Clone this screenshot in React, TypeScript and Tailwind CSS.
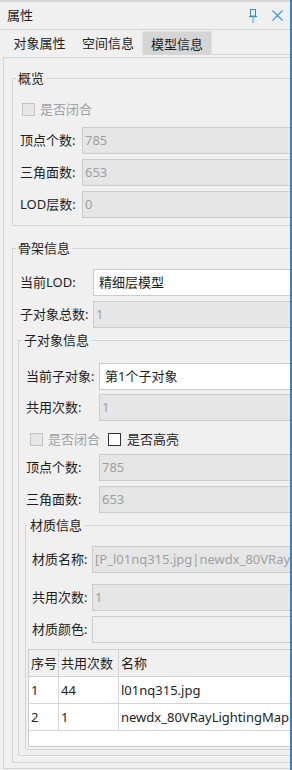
import type {ReactNode} from "react";

type BoxKind = "disabled" | "white" | "plain";

function Box({kind, value}: { kind: BoxKind; value?: string }) {
    const look =
        kind === "white"
            ? "bg-white text-[#1e1e1e] pl-[5px]"
            : kind === "disabled"
                ? "bg-[#e6e6e6] text-[#a0a0a0] pl-[2px]"
                : "bg-[#f0f0f0] pl-[2px]";
    return (
        <div className={`flex h-full flex-1 items-center overflow-hidden whitespace-nowrap border border-[#cccccc] ${look}`}>
            {value}
        </div>
    );
}

function Field({label, labelW, kind, value, className}: {
    label: string;
    labelW: string;
    kind: BoxKind;
    value?: string;
    className: string;
}) {
    return (
        <div className={`flex h-[27px] shrink-0 items-center ${className}`}>
            <span className={`${labelW} shrink-0 whitespace-nowrap`}>{label}</span>
            <Box kind={kind} value={value}/>
        </div>
    );
}

function Check({disabled, label}: { disabled?: boolean; label: string }) {
    return (
        <div className="flex items-center">
            <span
                className={
                    disabled
                        ? "h-[13px] w-[13px] border border-[#c4c4c4] bg-[#e6e6e6]"
                        : "h-[13px] w-[13px] border border-[#333333] bg-white"
                }
            />
            <span className={disabled ? "ml-[5px] text-[#a0a0a0]" : "ml-[6px] text-[#1e1e1e]"}>{label}</span>
        </div>
    );
}

function Group({title, className, legendMl = "ml-[3px]", children}: {
    title: string;
    className: string;
    legendMl?: string;
    children: ReactNode;
}) {
    return (
        <fieldset className={`border border-[#d5d5d5] ${className}`}>
            <legend className={`${legendMl} px-[2px] leading-[17px]`}>{title}</legend>
            {children}
        </fieldset>
    );
}

function PinIcon() {
    return (
        <svg width="10" height="16" viewBox="0 0 10 16">
            <rect x="2.5" y="1.5" width="5" height="6.5" fill="none" stroke="#2a93dc" strokeWidth="1"/>
            <rect x="1" y="8" width="8" height="1.2" fill="#2a93dc"/>
            <rect x="4.3" y="9" width="1.6" height="6" fill="#86c2ec"/>
        </svg>
    );
}

function CloseIcon() {
    return (
        <svg width="11" height="11" viewBox="0 0 11 11">
            <path d="M0.5 0.5 L10.5 10.5 M10.5 0.5 L0.5 10.5" stroke="#3a9be0" strokeWidth="1.2"/>
        </svg>
    );
}

export default function App() {
    return (
        <div
            className="flex h-[770px] w-[292px] bg-[#f0f0f0] text-[13px] leading-[17px] text-[#1e1e1e] font-[family-name:'Noto_Sans','Noto_Sans_CJK_SC',sans-serif]">
            <div className="flex w-[290px] flex-col overflow-hidden">
                <div className="h-[2px] shrink-0 bg-[#d6d6d6]"/>

                {/* title bar */}
                <div className="flex h-[28px] shrink-0 items-center border-b border-[#d5d5d5] pl-[7px] pr-[7px]">
                    <span>属性</span>
                    <div className="ml-auto flex items-center gap-[14px]">
                        <PinIcon/>
                        <CloseIcon/>
                    </div>
                </div>

                {/* tabs */}
                <div className="flex h-[25px] shrink-0">
                    <div className="ml-[5px] flex w-[69px] items-center justify-center pt-[2px]">对象属性</div>
                    <div className="flex w-[68px] items-center justify-center pt-[2px]">空间信息</div>
                    <div
                        className="mt-[1px] flex w-[70px] items-center justify-center border-x border-t border-[#e2e2e2] bg-[#d5d5d5] pt-[1px]">
                        模型信息
                    </div>
                    <div className="flex-1 border-b border-[#d5d5d5]"/>
                </div>

                {/* tab page */}
                <div className="ml-[3px] mt-[2px] w-[420px] shrink-0 border-b border-l border-t border-[#d5d5d5] pb-[5px]">
                    <Group title="概览" className="ml-[8px] mt-[12px] pb-[7px]">
                        <div className="mt-[12px] flex h-[21px] items-center pl-[9px]">
                            <Check disabled label="是否闭合"/>
                        </div>
                        <Field className="mt-[7px] pl-[7px]" labelW="w-[62px]" label="顶点个数:" kind="disabled" value="785"/>
                        <Field className="mt-[5px] pl-[7px]" labelW="w-[62px]" label="三角面数:" kind="disabled" value="653"/>
                        <Field className="mt-[5px] pl-[7px]" labelW="w-[62px]" label="LOD层数:" kind="disabled" value="0"/>
                    </Group>

                    <Group title="骨架信息" className="ml-[8px] mt-[14px] pb-[6px]">
                        <Field className="mt-[12px] pl-[7px]" labelW="w-[73px]" label="当前LOD:" kind="white" value="精细层模型"/>
                        <Field className="mt-[5px] pl-[7px]" labelW="w-[73px]" label="子对象总数:" kind="disabled" value="1"/>

                        <Group title="子对象信息" className="ml-[5px] mt-[4px] pb-[5px]">
                            <Field className="mt-[14px] pl-[7px]" labelW="w-[73px]" label="当前子对象:" kind="white"
                                   value="第1个子对象"/>
                            <Field className="mt-[4px] pl-[7px]" labelW="w-[73px]" label="共用次数:" kind="disabled" value="1"/>
                            <div className="mt-[11px] flex h-[14px] items-center gap-[8px] pl-[11px]">
                                <Check disabled label="是否闭合"/>
                                <Check label="是否高亮"/>
                            </div>
                            <Field className="mt-[8px] pl-[7px]" labelW="w-[73px]" label="顶点个数:" kind="disabled" value="785"/>
                            <Field className="mt-[5px] pl-[7px]" labelW="w-[73px]" label="三角面数:" kind="disabled" value="653"/>

                            <Group title="材质信息" legendMl="ml-[2px]" className="ml-[6px] mt-[4px] pb-[2px]">
                                <Field className="mt-[12px] pl-[6px]" labelW="w-[60px]" label="材质名称:" kind="disabled"
                                       value="[P_l01nq315.jpg|newdx_80VRayLightingMap.jpg]"/>
                                <Field className="mt-[11px] pl-[6px]" labelW="w-[60px]" label="共用次数:" kind="disabled" value="1"/>
                                <Field className="mt-[5px] pl-[6px]" labelW="w-[60px]" label="材质颜色:" kind="plain"/>

                                <div className="ml-[2px] mt-[6px] border border-[#cccccc] bg-white">
                                    <div className="flex h-[27px] border-b border-[#d5d5d5] bg-[#f0f0f0]">
                                        <div className="flex w-[30px] items-center border-r border-[#d5d5d5] pl-[2px]">序号</div>
                                        <div className="flex w-[60px] items-center border-r border-[#d5d5d5] pl-[2px] whitespace-nowrap">共用次数</div>
                                        <div className="flex items-center pl-[2px]">名称</div>
                                    </div>
                                    <div className="flex h-[27px] border-b border-[#d5d5d5]">
                                        <div className="flex w-[30px] items-center border-r border-[#d5d5d5] pl-[2px]">1</div>
                                        <div className="flex w-[60px] items-center border-r border-[#d5d5d5] pl-[2px]">44</div>
                                        <div className="flex items-center pl-[2px]">l01nq315.jpg</div>
                                    </div>
                                    <div className="flex h-[27px] border-b border-[#d5d5d5]">
                                        <div className="flex w-[30px] items-center border-r border-[#d5d5d5] pl-[2px]">2</div>
                                        <div className="flex w-[60px] items-center border-r border-[#d5d5d5] pl-[2px]">1</div>
                                        <div className="flex items-center whitespace-nowrap pl-[2px]">newdx_80VRayLightingMap.jpg</div>
                                    </div>
                                    <div className="h-[15px]"/>
                                </div>
                            </Group>
                        </Group>
                    </Group>
                </div>
            </div>
            <div className="w-[2px] shrink-0 bg-[#1c8ad8]"/>
        </div>
    );
}
